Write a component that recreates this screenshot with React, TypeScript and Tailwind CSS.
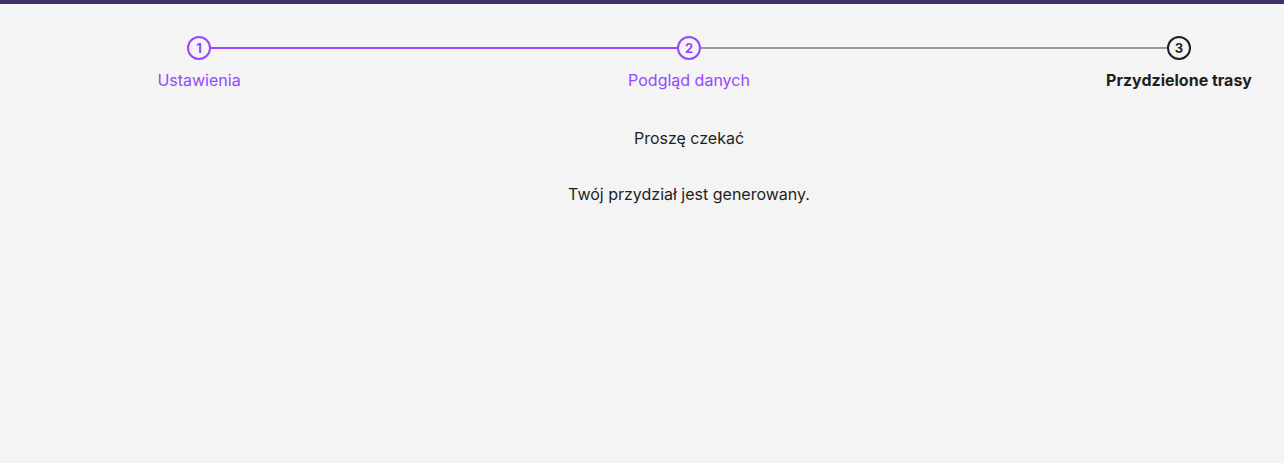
import React from "react";

const purple = "text-[#9747ff]";

function Circle({ n, active }: { n: number; active: boolean }) {
  return (
    <div
      className={`w-6 h-6 shrink-0 rounded-full border-2 flex items-center justify-center text-[13px] font-bold leading-none ${
        active ? "border-[#9747ff] text-[#9747ff]" : "border-[#1f1f1f] text-[#1f1f1f]"
      }`}
    >
      {n}
    </div>
  );
}

function Step({ n, label, active, current }: { n: number; label: string; active: boolean; current?: boolean }) {
  return (
    <div className="w-6 shrink-0 flex flex-col items-center">
      <Circle n={n} active={active} />
      <div
        className={`mt-2 whitespace-nowrap text-[16px] leading-6 ${
          current ? "font-bold text-[#1f1f1f]" : active ? purple : "text-[#1f1f1f]"
        }`}
      >
        {label}
      </div>
    </div>
  );
}

export default function App() {
  return (
    <div
      className="min-h-[463px] bg-[#f4f4f4] text-[#1f1f1f]"
      style={{ fontFamily: "Inter, 'Noto Sans', sans-serif" }}
    >
      <div className="h-1 bg-[#42306b]" />
      <div className="pl-[94px]">
        <div className="pt-8 px-[93px]">
          <div className="flex items-start">
            <Step n={1} label="Ustawienia" active />
            <div className="flex-1 h-0.5 mt-[11px] bg-[#9747ff]" />
            <Step n={2} label="Podgląd danych" active />
            <div className="flex-1 h-0.5 mt-[11px] bg-[#9a9a9a]" />
            <Step n={3} label="Przydzielone trasy" active={false} current />
          </div>
        </div>
        <div className="flex flex-col items-center text-[16px] leading-6 mt-[34px]">
          <p>Proszę czekać</p>
          <p className="mt-8">Twój przydział jest generowany.</p>
        </div>
      </div>
    </div>
  );
}
